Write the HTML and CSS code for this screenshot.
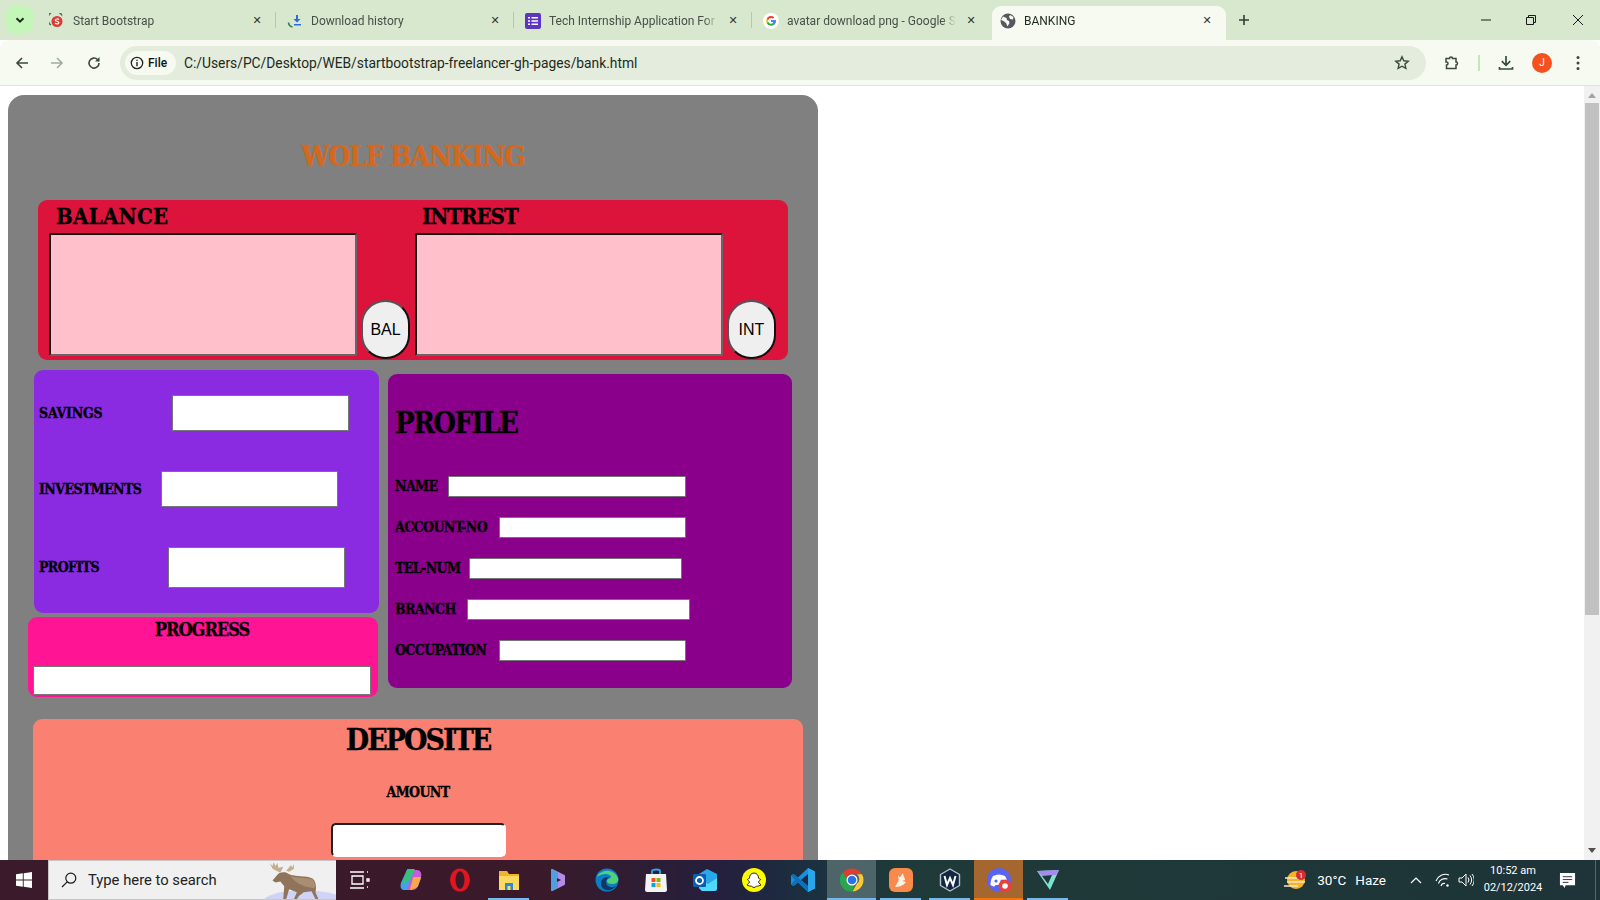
FILE: index.html
```html
<!DOCTYPE html>
<html lang="en">
<head>
    <meta charset="UTF-8">
    <meta name="viewport" content="width=device-width, initial-scale=1.0">
    <title>BANKING</title>
    <link rel="stylesheet" href="styles.css">
</head>
<body>
    <div class="tabstrip">
        <div class="tab-search">
            <svg class="ico-s" viewBox="0 0 12 12"><path d="M2.500 4.200 6 7.700l3.500-3.500" fill="none" stroke="#1c2a1c" stroke-width="2"/></svg>
        </div>
        <div class="tab">
            <svg class="favicon" viewBox="0 0 16 16"><path d="M2 12A7.500 7.500 0 1 1 13 2.500" fill="none" stroke="#3d7a4a" stroke-width="1.500"/><circle cx="8" cy="8.500" r="5.500" fill="#dd3a32"/><path d="M10 6.500C9 5.600 6.300 5.800 6.300 7.200c0 1.500 3.600 1 3.600 2.500 0 1.400-2.600 1.500-3.900.6" fill="none" stroke="#fff" stroke-width="1.200"/></svg>
            <span class="tab-title">Start Bootstrap</span>
            <span class="tab-close">✕</span>
        </div>
        <div class="tab">
            <svg class="favicon" viewBox="0 0 16 16"><path d="M9 2h2v4h2.500L10 9.500 6.500 6H9z" fill="#2a6fd8"/><path d="M7 11h7v1.500H7z" fill="#2a6fd8"/><path d="M1.500 9.500c.2 2.500 1.800 4 4 4.500" fill="none" stroke="#3d7a4a" stroke-width="1.600"/></svg>
            <span class="tab-title">Download history</span>
            <span class="tab-close">✕</span>
        </div>
        <div class="tab">
            <svg class="favicon" viewBox="0 0 16 16"><rect width="16" height="16" rx="2" fill="#5e35c1"/><path d="M3 4h2v1.600H3zm3.500 0H13v1.600H6.500zM3 7.200h2v1.600H3zm3.500 0H13v1.600H6.500zM3 10.400h2V12H3zm3.500 0H13V12H6.500z" fill="#fff"/></svg>
            <span class="tab-title">Tech Internship Application For</span>
            <span class="tab-close">✕</span>
        </div>
        <div class="tab tab-last">
            <svg class="favicon" viewBox="0 0 16 16"><circle cx="8" cy="8" r="8" fill="#fff"/><path d="M12.600 6.900H8v1.900h2.700c-.3 1.300-1.300 2-2.700 2a3 3 0 0 1-2.800-2L3.600 10A4.900 4.900 0 0 0 8 12.800c2.700 0 4.800-1.900 4.800-4.800z" fill="#34a853"/><path d="M12.800 8c0-.4 0-.8-.2-1.100H8v1.900h2.700c-.1.600-.5 1.200-1 1.500l1.500 1.200c.9-.8 1.600-2 1.600-3.500z" fill="#4285f4"/><path d="M5.200 8.800a3 3 0 0 1 0-1.700L3.600 5.900a4.900 4.900 0 0 0 0 4.100z" fill="#fbbc05"/><path d="M8 5c.8 0 1.400.3 1.900.7l1.400-1.400A4.800 4.800 0 0 0 3.600 5.900l1.600 1.200A3 3 0 0 1 8 5z" fill="#ea4335"/></svg>
            <span class="tab-title">avatar download png - Google S</span>
            <span class="tab-close">✕</span>
        </div>
        <div class="tab tab-active">
            <svg class="favicon" viewBox="0 0 16 16"><circle cx="8" cy="8" r="7.500" fill="#55595f"/><path d="M3 3.500 6.500 5 7 7l2 1 .5 2-2 3.500L6 10 3.500 8 1 7zM10 2l3.500 2-.5 2.500L10 6 9 3.500z" fill="#f6faf1"/></svg>
            <span class="tab-title">BANKING</span>
            <span class="tab-close">✕</span>
        </div>
        <svg class="new-tab" viewBox="0 0 12 12"><path d="M6 1v10M1 6h10" stroke="#2f4030" stroke-width="1.600"/></svg>
        <div class="window-btns">
            <svg viewBox="0 0 12 12"><path d="M1 6h10" stroke="#1a1a1a"/></svg>
            <svg viewBox="0 0 12 12"><path d="M1.500 3.500h7v7h-7zM3.500 3.500v-2h7v7h-2" fill="none" stroke="#1a1a1a"/></svg>
            <svg class="window-close" viewBox="0 0 12 12"><path d="M1 1l10 10M11 1 1 11" stroke="#1a1a1a"/></svg>
        </div>
    </div>

    <div class="toolbar">
        <svg class="tool back" viewBox="0 0 16 16"><path d="M14 8H3M8 3 3 8l5 5" fill="none" stroke="#3a4a3c" stroke-width="1.600"/></svg>
        <svg class="tool forward" viewBox="0 0 16 16"><path d="M2 8h11M8 3l5 5-5 5" fill="none" stroke="#a3aca1" stroke-width="1.600"/></svg>
        <svg class="tool reload" viewBox="0 0 16 16"><path d="M13 8a5 5 0 1 1-1.500-3.500L13 6" fill="none" stroke="#3a4a3c" stroke-width="1.600"/><path d="M13.500 2v4.500H9z" fill="#3a4a3c"/></svg>
        <div class="omnibox">
            <div class="site-chip">
                <svg class="info" viewBox="0 0 14 14"><circle cx="7" cy="7" r="5.700" fill="none" stroke="#222" stroke-width="1.300"/><path d="M7 6v4.200M7 3.800v1.300" stroke="#222" stroke-width="1.400"/></svg>
                <span>File</span>
            </div>
            <span class="url">C:/Users/PC/Desktop/WEB/startbootstrap-freelancer-gh-pages/bank.html</span>
            <svg class="star" viewBox="0 0 16 16"><path d="m8 1.800 1.800 4 4.400.4-3.300 2.900 1 4.300L8 11.200l-3.900 2.200 1-4.300-3.300-2.900 4.400-.4z" fill="none" stroke="#3a4a3c" stroke-width="1.400"/></svg>
        </div>
        <svg class="tool ext" viewBox="0 0 16 16"><path d="M2 3.500h3.500a1.500 1.500 0 0 1 3 0H12V7a1.500 1.500 0 0 1 0 3v3.500H2.500V10a1.500 1.500 0 0 0 0-3H2z" fill="none" stroke="#3a4a3c" stroke-width="1.500"/></svg>
        <span class="tool-divider"></span>
        <svg class="tool download" viewBox="0 0 16 16"><path d="M8 1v9M3.800 6.200 8 10.400l4.200-4.200M1.500 12v2h13v-2" fill="none" stroke="#3a4a3c" stroke-width="1.700"/></svg>
        <span class="avatar">J</span>
        <svg class="tool more" viewBox="0 0 16 16"><circle cx="8" cy="2.500" r="1.500" fill="#3a4a3c"/><circle cx="8" cy="8" r="1.500" fill="#3a4a3c"/><circle cx="8" cy="13.500" r="1.500" fill="#3a4a3c"/></svg>
    </div>

    <div class="viewport">
        <div class="page">
            <div class="bank">
                <h1 class="bank-title">WOLF BANKING</h1>

                <div class="balance-card">
                    <div class="balance-col">
                        <h2 class="balance-head head-wide">BALANCE</h2>
                        <div class="balance-row">
                            <textarea class="balance-box"></textarea>
                            <button class="round-btn">BAL</button>
                        </div>
                    </div>
                    <div class="balance-col">
                        <h2 class="balance-head">INTREST</h2>
                        <div class="balance-row">
                            <textarea class="balance-box"></textarea>
                            <button class="round-btn">INT</button>
                        </div>
                    </div>
                </div>

                <div class="middle">
                    <div class="left-col">
                        <div class="funds">
                            <div class="funds-row">
                                <label class="fancy-label w-savings">SAVINGS</label>
                                <input class="plain-input">
                            </div>
                            <div class="funds-row">
                                <label class="fancy-label w-invest">INVESTMENTS</label>
                                <input class="plain-input">
                            </div>
                            <div class="funds-row">
                                <label class="fancy-label w-profits">PROFITS</label>
                                <input class="plain-input tall">
                            </div>
                        </div>
                        <div class="progress">
                            <h3 class="progress-head">PROGRESS</h3>
                            <input class="plain-input progress-input">
                        </div>
                    </div>

                    <div class="profile">
                        <h2 class="profile-head">PROFILE</h2>
                        <div class="profile-row">
                            <label class="fancy-label w-name">NAME</label>
                            <input class="plain-input short i-name">
                        </div>
                        <div class="profile-row">
                            <label class="fancy-label w-account">ACCOUNT-NO</label>
                            <input class="plain-input short i-account">
                        </div>
                        <div class="profile-row">
                            <label class="fancy-label w-tel">TEL-NUM</label>
                            <input class="plain-input short i-tel">
                        </div>
                        <div class="profile-row">
                            <label class="fancy-label w-branch">BRANCH</label>
                            <input class="plain-input short i-branch">
                        </div>
                        <div class="profile-row">
                            <label class="fancy-label w-account">OCCUPATION</label>
                            <input class="plain-input short i-account">
                        </div>
                    </div>
                </div>

                <div class="deposit">
                    <h2 class="deposit-head">DEPOSITE</h2>
                    <label class="fancy-label amount-label">AMOUNT</label>
                    <input class="amount-input">
                </div>
            </div>
        </div>
        <div class="scrollbar">
            <span class="arrow-up"></span>
            <span class="thumb"></span>
            <span class="arrow-down"></span>
        </div>
    </div>

    <div class="taskbar">
        <div class="start">
            <svg viewBox="0 0 16 16"><path d="M0 2.300 6.800 1.300v6.300H0zM7.700 1.200 16 0v7.600H7.700zM0 8.400h6.800v6.300L0 13.700zM7.700 8.400H16V16l-8.300-1.200z" fill="#fff"/></svg>
        </div>
        <div class="search">
            <svg class="search-ico" viewBox="0 0 16 16"><circle cx="9.800" cy="6.200" r="5" fill="none" stroke="#1a1a1a" stroke-width="1.200"/><path d="M6.200 9.800 1 15" stroke="#1a1a1a" stroke-width="1.200"/></svg>
            <span>Type here to search</span>
            <svg class="moose" viewBox="0 0 80 40">
                <ellipse cx="50" cy="42" rx="42" ry="12" fill="#ced3f7"/>
                <path d="M23 14c3-3 8-3 11-1 8 4 18 1 25 5 4 3 4 10 3 14l3 7h-3l-4-8-8 1-5 4-2 3h-3l3-7-8-3-3 10h-3l1-13-4-5-5 1-3-2z" fill="#8f735a"/>
                <path d="M36 15c8 3 16 1 23 4 3 3 3 7 2 9-9-2-18-3-25-13z" fill="#a98e73"/>
                <path d="M26 12 18 8l-3-6 3 3 1-4 2 4 2-3 1 5 5-1-2 4zM32 10l5-6 1 3 2-4v5l-5 3z" fill="#c4ae8e"/>
            </svg>
        </div>
        <div class="task-icons">
            <div class="task-item task-view">
                <svg viewBox="0 0 24 24"><path d="M3 4h14M3 20h14M5 8h11v8H5zM20 4h1M20 11h2v2h-2zM20 19h1" fill="none" stroke="#fff" stroke-width="1.300"/></svg>
            </div>
            <div class="task-item">
                <svg viewBox="0 0 24 24" stroke-linejoin="round"><path d="M9 2h5L9 21H6C2 21 2 18 3 15z" fill="#3fa4e8" stroke="#3fa4e8" stroke-width="2"/><path d="M9 2h6l-3 8-8 5z" fill="#38c17c" stroke="#38c17c" stroke-width="2"/><path d="M16 3h2c3 0 4 3 3 6l-3 9c-1 2-3 3-5 3h-4z" fill="#c85bd8" stroke="#c85bd8" stroke-width="2"/><path d="M15 10h6l-3 8-6 3z" fill="#f7a84a" stroke="#f7a84a" stroke-width="2"/></svg>
            </div>
            <div class="task-item">
                <svg viewBox="0 0 24 24"><ellipse cx="12" cy="12" rx="10" ry="11.500" fill="#e0161f"/><ellipse cx="12" cy="12" rx="4.500" ry="9" fill="#3a1a2a"/></svg>
            </div>
            <div class="task-item task-open-narrow">
                <svg viewBox="0 0 24 24"><path d="M2 3h8l2 3h10v16H2z" fill="#f2b32a"/><path d="M2 8h20v14H2z" fill="#fcd95f"/><path d="M8 22v-7h8v7h-2.500v-4h-3v4z" fill="#2a8ad8"/></svg>
            </div>
            <div class="task-item">
                <svg viewBox="0 0 24 24" stroke-linejoin="round"><path d="M6 2l12 6v8L6 22z" fill="#b18de8" stroke="#b18de8" stroke-width="2"/><path d="M6 2l5 3v14l-5 3z" fill="#4f9ee0" stroke="#4f9ee0" stroke-width="2"/><path d="M11 10l4 2-4 2z" fill="#3a1a2a"/></svg>
            </div>
            <div class="task-item">
                <svg viewBox="0 0 24 24"><circle cx="12" cy="12" r="11.500" fill="#0c7ec8"/><path d="M2 9C5 1 19 0 23 10c1 4-2 6-6 6-3 0-5-1-5-3 0-3 4-3 4-4 0-3-8-5-14 0z" fill="#4fd07a"/><path d="M6 15c0-5 6-7 9-5-3 0-4 2-4 4 0 4 5 7 10 4-4 6-15 6-15-3z" fill="#12365e"/></svg>
            </div>
            <div class="task-item">
                <svg viewBox="0 0 24 24"><path d="M8 6V3c0-2 8-2 8 0v3" fill="none" stroke="#2aa8e8" stroke-width="1.800"/><path d="M2 6h20l1 16c0 1-1 2-2 2H3c-1 0-2-1-2-2z" fill="#f3f3f3"/><path d="M7.500 10h4v4h-4z" fill="#f25022"/><path d="M12.500 10h4v4h-4z" fill="#7fba00"/><path d="M7.500 15h4v4h-4z" fill="#00a4ef"/><path d="M12.500 15h4v4h-4z" fill="#ffb900"/></svg>
            </div>
            <div class="task-item">
                <svg viewBox="0 0 24 24"><path d="M6 6l8-5 10 5v14c0 2-1 3-3 3H9l-3-3z" fill="#28a8ea"/><path d="M6 10l9 6 9-6v11c0 1-1 2-3 2H9l-3-3z" fill="#50d9ff"/><rect y="6" width="13" height="13" rx="1" fill="#0a5fb4"/><circle cx="6.500" cy="12.500" r="3.500" fill="none" stroke="#fff" stroke-width="1.800"/></svg>
            </div>
            <div class="task-item">
                <svg viewBox="0 0 24 24"><circle cx="12" cy="12" r="12" fill="#fffc00"/><path d="M12 5c3 0 4.500 2.500 4.500 5 0 1 2 .6 2 1.500S16.500 13 16.500 14s2.500 2.500 2.500 3-2 .5-2.500 1-1-.2-2 .2-1.300 1.300-2.500 1.300-1.500-.9-2.500-1.300-1.500.3-2-.2S5 17.500 5 17s2.500-2 2.500-3-2-1.600-2-2.500 2-.5 2-1.500c0-2.500 1.500-5 4.500-5z" fill="#fff" stroke="#111" stroke-width=".9"/></svg>
            </div>
            <div class="task-item">
                <svg viewBox="0 0 24 24"><path d="M17 0l7 3.500v17L17 24 7 14.500 2.500 18 0 16.500V7.500L2.500 6 7 9.500z" fill="#1a8fdc"/><path d="M17 6v12l-7-6z" fill="#1c2a44"/><path d="M17 0l7 3.500v17L17 24z" fill="#2aa7ea"/><path d="M0 7.500 2.500 6 17 18v6L7 14.500 2.500 18 0 16.500l4-4.500z" fill="#0d70b8"/></svg>
            </div>
            <div class="task-item task-active">
                <svg viewBox="0 0 24 24"><path d="M12 .5a11.500 11.500 0 0 1 10 5.750H12a5.750 5.750 0 0 0-5.500 4L3 4.200A11.500 11.500 0 0 1 12 .5z" fill="#e33b2e"/><path d="M22 6.250A11.500 11.500 0 0 1 12.500 23.500L17 15.500a5.750 5.750 0 0 0 0-9.250z" fill="#fcc934"/><path d="M12.500 23.500A11.500 11.500 0 0 1 3 4.200l4.800 8.300a5.750 5.750 0 0 0 7 3.100z" fill="#2aa44f"/><circle cx="12" cy="12" r="5.500" fill="#fff"/><circle cx="12" cy="12" r="4.300" fill="#2a70e8"/></svg>
            </div>
            <div class="task-item task-open">
                <svg viewBox="0 0 24 24"><rect width="24" height="24" rx="6" fill="#f98a4b"/><path d="M6 19C9 15 10 10 14 5c0 3 2 5 2 7l-3 1 4 1c-3 4-7 5-11 5z" fill="#fff3e8"/><path d="M9 7c1 2 2 3 4 3l-3 4z" fill="#fff3e8"/></svg>
            </div>
            <div class="task-item task-open">
                <svg viewBox="0 0 24 24"><path d="M12 1l9.500 5.500v11L12 23l-9.500-5.500v-11z" fill="#0f2742" stroke="#b9c2cc" stroke-width="1.400" stroke-linejoin="round"/><path d="M6.500 8l2.500 9 3-7 3 7 2.500-9" fill="none" stroke="#fff" stroke-width="2"/></svg>
            </div>
            <div class="task-item task-alert">
                <svg viewBox="0 0 24 24"><circle cx="12" cy="12" r="12" fill="#5865f2"/><path d="M6 8c4-2 8-2 12 0 2 3 2.500 6 2.500 9-2 1-3 1.500-4 1.500l-1-1.500H8.500l-1 1.500c-1 0-2-.5-4-1.500 0-3 .5-6 2.500-9z" fill="#fff"/><circle cx="9" cy="13" r="1.600" fill="#5865f2"/><circle cx="15" cy="13" r="1.600" fill="#5865f2"/><circle cx="18" cy="18" r="6.500" fill="#e8403a"/><circle cx="18" cy="18" r="2.800" fill="#fff"/></svg>
            </div>
            <div class="task-item task-open">
                <svg viewBox="0 0 24 24"><path d="M1 3l22-1-9 20z" fill="#7ee0d0"/><path d="M1 3l22-1-3 5-14 1z" fill="#a78af0"/><path d="M6 8l10-1-4 9z" fill="#203a3a"/></svg>
            </div>
        </div>
        <div class="tray">
            <svg class="weather" viewBox="0 0 24 20"><circle cx="12" cy="10" r="9" fill="#f5b32c"/><path d="M1 8h15M3 12h18M0 16h14" stroke="#f7e7c6" stroke-width="1.600"/><circle cx="17" cy="5" r="5" fill="#d62c2c"/><text class="weather-badge" x="17" y="8">1</text></svg>
            <span class="temp">30°C</span>
            <span class="haze">Haze</span>
            <svg class="chevron" viewBox="0 0 12 8"><path d="M1 7l5-5 5 5" fill="none" stroke="#fff" stroke-width="1.200"/></svg>
            <svg class="wifi" viewBox="0 0 16 16"><path d="M1 9a10 10 0 0 1 13-6M3.500 11.500a7 7 0 0 1 9-4.500M6 14a3.500 3.500 0 0 1 4-2.500" fill="none" stroke="#fff" stroke-width="1.100"/><circle cx="12.500" cy="13.500" r="1.200" fill="#fff"/></svg>
            <svg class="volume" viewBox="0 0 16 16"><path d="M1 6h3l4-4v12l-4-4H1z" fill="none" stroke="#fff"/><path d="M10 5.500a4 4 0 0 1 0 5M12 3.500a7 7 0 0 1 0 9M14 2a9 9 0 0 1 0 12" fill="none" stroke="#fff"/></svg>
            <div class="clock">
                <span>10:52 am</span>
                <span>02/12/2024</span>
            </div>
            <svg class="notify" viewBox="0 0 18 18"><path d="M1 1h16v13H7l-1 3-2-3H1z" fill="#fff"/><path d="M4 5h10M4 8h10M4 11h6" stroke="#1f3438"/></svg>
            <span class="show-desktop"></span>
        </div>
    </div>
</body>
</html>
```

FILE: styles.css
```css
* {
    box-sizing: border-box;
}
body {
    margin: 0;
    height: 900px;
    overflow: hidden;
    display: flex;
    flex-direction: column;
    font-family: Roboto, "Noto Sans", sans-serif;
    background: #fff;
}

/* browser tabs */
.tabstrip {
    height: 40px;
    flex: none;
    display: flex;
    align-items: flex-start;
    background: #d7e8cf;
    padding-left: 6px;
}
.tab-search {
    width: 27px;
    height: 27px;
    margin-top: 6px;
    margin-right: 5px;
    border-radius: 8px;
    background: #c5f6b9;
    display: flex;
    align-items: center;
    justify-content: center;
}
.ico-s {
    width: 12px;
    height: 12px;
}
.tab {
    width: 238px;
    height: 34px;
    margin-top: 6px;
    padding: 0 0 5px 11px;
    flex: none;
    display: flex;
    align-items: center;
    position: relative;
    font-size: 12px;
    color: #474f47;
}
.tab::after {
    content: "";
    position: absolute;
    right: 0;
    top: 6px;
    height: 16px;
    width: 1px;
    background: #a5d49b;
}
.tab-last::after,
.tab-active::after {
    display: none;
}
.tab-active {
    width: 234px;
    margin-left: 2px;
    padding-left: 8px;
    background: #f6faf1;
    border-radius: 9px 9px 0 0;
    color: #1f2a20;
}
.favicon {
    width: 16px;
    height: 16px;
    flex: none;
    margin-right: 8px;
}
.tab-title {
    flex: 1;
    min-width: 0;
    white-space: nowrap;
    overflow: hidden;
    -webkit-mask-image: linear-gradient(90deg, #000 calc(100% - 14px), transparent);
    mask-image: linear-gradient(90deg, #000 calc(100% - 14px), transparent);
}
.tab-close {
    width: 14px;
    margin-right: 12px;
    margin-left: 8px;
    font-size: 11px;
    font-weight: bold;
    color: #333;
    flex: none;
    font-family: "DejaVu Sans", sans-serif;
    text-align: center;
}
.new-tab {
    width: 12px;
    height: 12px;
    margin: 14px 0 0 12px;
}
.window-btns {
    margin-left: auto;
    display: flex;
    gap: 33px;
    padding: 14px 16px 0 0;
}
.window-btns svg {
    width: 12px;
    height: 12px;
}
.window-btns .window-close {
    margin-left: 2px;
}

/* address bar row */
.toolbar {
    height: 46px;
    flex: none;
    display: flex;
    align-items: center;
    background: #f6faf1;
    border-bottom: 1px solid #dce6d5;
    border-radius: 9px 9px 0 0;
    position: relative;
}
.tool {
    width: 16px;
    height: 16px;
    flex: none;
}
.back {
    margin-left: 14px;
}
.forward {
    margin-left: 19px;
}
.reload {
    margin-left: 21px;
}
.omnibox {
    width: 1306px;
    height: 34px;
    margin-left: 18px;
    border-radius: 17px;
    background: #e3ecdd;
    display: flex;
    align-items: center;
    padding-left: 5px;
    font-size: 13.800px;
    color: #1d2a20;
}
.site-chip {
    width: 51px;
    height: 24px;
    border-radius: 12px;
    background: #f6faf1;
    display: flex;
    align-items: center;
    padding-left: 5px;
    gap: 4px;
    font-size: 12px;
    font-weight: 500;
    color: #111;
}
.info {
    width: 14px;
    height: 14px;
}
.url {
    margin-left: 8px;
    white-space: nowrap;
}
.star {
    width: 16px;
    height: 16px;
    margin-left: auto;
    margin-right: 16px;
}
.ext {
    margin-left: 18px;
}
.tool-divider {
    width: 2px;
    height: 16px;
    margin-left: 18px;
    background: #bfeab3;
}
.download {
    margin-left: 18px;
}
.avatar {
    width: 20px;
    height: 20px;
    margin-left: 18px;
    border-radius: 50%;
    background: #f4511e;
    color: #fff;
    font-size: 10px;
    display: flex;
    align-items: center;
    justify-content: center;
}
.more {
    margin-left: 18px;
}

/* page area */
.viewport {
    flex: 1;
    min-height: 0;
    display: flex;
}
.page {
    flex: 1;
    overflow: hidden;
}
.scrollbar {
    width: 16px;
    background: #f1f1f1;
    display: flex;
    flex-direction: column;
    align-items: center;
    padding: 7px 0;
}
.arrow-up {
    border: 4px solid transparent;
    border-top: 0;
    border-bottom: 5px solid #a3a3a3;
}
.arrow-down {
    margin-top: auto;
    border: 4px solid transparent;
    border-bottom: 0;
    border-top: 5px solid #505050;
}
.thumb {
    width: 14px;
    height: 512px;
    margin-top: 5px;
    background: #c1c1c1;
}

.bank {
    width: 810px;
    margin: 9px 0 0 8px;
    padding-top: 47px;
    height: 900px;
    background: #808080;
    border-radius: 16px 16px 0 0;
    font-family: "DejaVu Serif", serif;
    font-stretch: condensed;
    font-weight: bold;
    -webkit-text-stroke: 0.3px currentColor;
}
h1,
h2,
h3 {
    margin: 0;
    color: #000;
}
.bank-title {
    text-align: center;
    font-size: 28px;
    line-height: 30px;
    letter-spacing: -1.100px;
    color: #d2691e;
}
.balance-card {
    width: 750px;
    height: 160px;
    margin: 28px 0 0 30px;
    padding-left: 11px;
    display: flex;
    gap: 5px;
    border-radius: 9px;
    background: #dc143c;
}
.balance-col {
    width: 361px;
}
.balance-head {
    height: 33px;
    padding: 2px 0 0 7px;
    font-size: 22px;
    line-height: 28px;
    letter-spacing: -1px;
}
.head-wide {
    letter-spacing: 0.300px;
}
.balance-row {
    display: flex;
    align-items: flex-end;
    gap: 4px;
}
.balance-box {
    width: 308px;
    height: 123px;
    margin-bottom: 3px;
    flex: none;
    resize: none;
    background: #ffc0cb;
    border: 2px solid;
    border-color: #111 #666 #666 #111;
    border-radius: 2px;
}
.round-btn {
    width: 49px;
    height: 59px;
    padding: 0;
    flex: none;
    border: 2px solid;
    border-color: #555 #111 #111 #555;
    border-radius: 24px;
    background: #efefef;
    color: #000;
    font-family: "Liberation Sans", Arial, sans-serif;
    font-size: 16px;
    -webkit-text-stroke: 0;
    font-weight: normal;
}
.middle {
    display: flex;
    align-items: flex-start;
    margin-top: 10px;
    padding-left: 20px;
}
.left-col {
    width: 351px;
    flex: none;
}
.funds {
    width: 345px;
    height: 243px;
    margin-left: 6px;
    padding: 25px 0 0 5px;
    display: flex;
    flex-direction: column;
    gap: 40px;
    border-radius: 9px;
    background: #8a2be2;
}
.funds-row {
    display: flex;
    align-items: center;
}
.fancy-label {
    font-size: 14px;
    line-height: 18px;
    letter-spacing: -0.600px;
    color: #000;
    white-space: nowrap;
    flex: none;
}
.w-savings {
    width: 133px;
    letter-spacing: -0.200px;
}
.w-invest {
    width: 122px;
}
.w-profits {
    width: 129px;
    padding-bottom: 2px;
}
.plain-input {
    width: 177px;
    height: 36px;
    border: 1px solid #767676;
    background: #fff;
    border-radius: 1px;
}
.plain-input.tall {
    height: 41px;
}
.progress {
    width: 350px;
    height: 80px;
    margin-top: 4px;
    padding-top: 3px;
    border-radius: 9px;
    background: #ff1493;
}
.progress-head {
    height: 46px;
    padding-right: 2px;
    text-align: center;
    font-size: 18px;
    line-height: 20px;
    letter-spacing: -1px;
}
.plain-input.progress-input {
    width: 338px;
    height: 29px;
    margin-left: 5px;
}
.profile {
    width: 404px;
    height: 314px;
    margin: 4px 0 0 9px;
    padding: 33px 0 0 7px;
    border-radius: 9px;
    background: #8b008b;
}
.profile-head {
    height: 69px;
    font-size: 29px;
    line-height: 32px;
    letter-spacing: -1.500px;
}
.profile-row {
    display: flex;
    align-items: center;
    margin-bottom: 20px;
}
.profile-row .fancy-label {
    padding-bottom: 2px;
}
.plain-input.short {
    height: 21px;
}
.w-name {
    width: 53px;
}
.w-account {
    width: 104px;
}
.w-tel {
    width: 74px;
}
.w-branch {
    width: 72px;
}
.plain-input.i-name {
    width: 238px;
}
.plain-input.i-account {
    width: 187px;
}
.plain-input.i-tel {
    width: 213px;
}
.plain-input.i-branch {
    width: 223px;
}
.deposit {
    width: 770px;
    height: 200px;
    margin: 22px 0 0 25px;
    padding-top: 4px;
    display: flex;
    flex-direction: column;
    align-items: center;
    border-radius: 9px;
    background: #fa8072;
}
.deposit-head {
    font-size: 30px;
    line-height: 34px;
    letter-spacing: -2px;
}
.amount-label {
    margin-top: 26px;
}
.amount-input {
    width: 175px;
    height: 34px;
    margin-top: 22px;
    border: 2px solid;
    border-color: #222 #fff #fff #222;
    border-radius: 5px;
    background: #fff;
}

/* windows taskbar */
.taskbar {
    height: 40px;
    flex: none;
    display: flex;
    color: #fff;
    background: linear-gradient(90deg, #3b1a2b 0, #3a1a2a 540px, #241f3d 720px, #1b3040 810px, #1f3a38 900px, #1e3438 100%);
}
.start {
    width: 48px;
    display: flex;
    align-items: center;
    justify-content: center;
}
.start svg {
    width: 16px;
    height: 16px;
}
.search {
    width: 288px;
    display: flex;
    align-items: center;
    gap: 11px;
    padding-left: 12px;
    position: relative;
    background: #f0f0f0;
    border: solid #c6c6c6;
    border-width: 1px 0 1px 1px;
    color: #222;
    font-size: 14.800px;
    overflow: hidden;
}
.search-ico {
    width: 16px;
    height: 16px;
}
.moose {
    position: absolute;
    right: 0;
    top: 0;
    width: 84px;
    height: 39px;
}
.task-icons {
    display: flex;
    margin-left: 1px;
}
.task-item {
    width: 49px;
    height: 40px;
    display: flex;
    align-items: center;
    justify-content: center;
    position: relative;
}
.task-item svg {
    width: 24px;
    height: 24px;
}
.task-view svg {
    margin-right: 6px;
}
.task-open::after,
.task-open-narrow::after,
.task-active::after,
.task-alert::after {
    content: "";
    position: absolute;
    left: 4px;
    right: 4px;
    bottom: 0;
    height: 2px;
    background: #76b9ed;
}
.task-active {
    background: #4d6469;
}
.task-active::after {
    left: 0;
    right: 0;
}
.task-alert {
    background: #a5672f;
}
.task-alert::after {
    left: 0;
    right: 0;
    background: #f7730c;
}
.tray {
    margin-left: auto;
    display: flex;
    align-items: center;
    font-size: 13.500px;
}
.weather {
    width: 24px;
    height: 20px;
    margin-right: 2px;
}
.weather-badge {
    font-size: 8px;
    fill: #fff;
    text-anchor: middle;
}
.temp {
    margin-left: 7px;
}
.haze {
    margin-left: 9px;
}
.chevron {
    width: 12px;
    height: 8px;
    margin-left: 24px;
}
.wifi {
    width: 16px;
    height: 16px;
    margin-left: 13px;
}
.volume {
    width: 16px;
    height: 16px;
    margin-left: 7px;
}
.clock {
    width: 76px;
    margin-left: 1px;
    padding-bottom: 2px;
    display: flex;
    flex-direction: column;
    align-items: center;
    font-size: 11px;
    line-height: 17px;
}
.notify {
    width: 17px;
    height: 17px;
    margin-left: 8px;
}
.show-desktop {
    width: 1px;
    height: 40px;
    margin-left: 19px;
    margin-right: 4px;
    background: #55686b;
}
```
